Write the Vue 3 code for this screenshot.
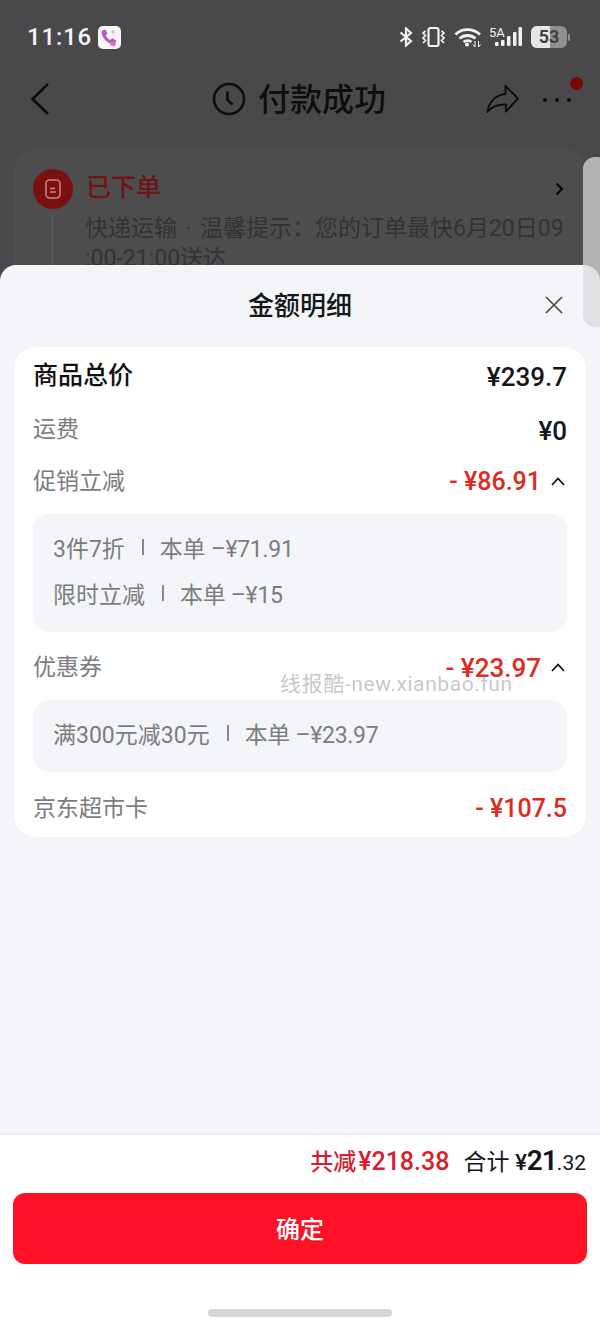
<script setup>
const promos = [
  { name: '3件7折', amount: '本单 –¥71.91' },
  { name: '限时立减', amount: '本单 –¥15' }
]
const coupons = [{ name: '满300元减30元', amount: '本单 –¥23.97' }]
</script>

<template>
  <div class="page">
    <div class="status">
      <span class="time">11:16</span>
      <svg class="app-icon" width="23" height="23" viewBox="0 0 23 23">
        <rect width="23" height="23" rx="5" fill="#fbf6fd" />
        <path d="M4.500 4.500l3-1 2.200 4-1.900 1.700c.8 2.200 2.400 3.900 4.600 4.900l1.900-1.800 3.900 2.300-1 3c-.8 1.100-2.500 1.300-4.400.5C8.500 16 5.200 12.400 3.800 8.200c-.4-1.500-.1-2.800.7-3.700z" fill="#b25ac6" />
        <path d="M11.500 15l2 1.500 1-1 3.500 2-1 2.500c-1 .5-2.500.3-4.500-.8z" fill="#e56fb8" />
        <path d="M15 3.500l.7 1.800 1.800.7-1.800.7-.7 1.800-.7-1.800-1.800-.7 1.800-.7z" fill="#e9a3d6" />
      </svg>
      <div class="status-right">
        <svg width="14" height="20" viewBox="0 0 14 20" fill="none" stroke="#f2f2f2" stroke-width="2.200">
          <path d="M1.500 5.500L12 14l-5 4.500v-17L12 6 1.500 14.500" />
        </svg>
        <svg width="25" height="22" viewBox="0 0 25 22" fill="none" stroke="#f2f2f2" stroke-width="2.200">
          <rect x="7.500" y="2" width="10" height="18" rx="2" />
          <path d="M4.500 5L2 7l2.500 2.500L2 12l2.500 2.500L2 17M20.500 5L23 7l-2.500 2.500L23 12l-2.500 2.500L23 17" stroke-width="1.700" />
        </svg>
        <svg width="28" height="20" viewBox="0 0 28 20" fill="none" stroke="#f2f2f2" stroke-width="2.800">
          <path d="M1.500 7.500C8 1 19 1 26 7.500M5.500 11.500c4.500-4 11.500-4 16 0M9.500 15c2.300-1.800 6-1.800 8 0" />
          <circle cx="13" cy="17.500" r="2" fill="#f2f2f2" stroke="none" />
          <path d="M21 14v6l-2-2.500M24.500 14v6l2-2.500" stroke-width="1" />
        </svg>
        <div class="signal">
          <span class="signal-label">5A</span>
          <svg width="33" height="20" viewBox="0 0 33 20" fill="#f2f2f2">
            <rect x="6" y="15" width="3.500" height="4" rx="1" />
            <rect x="12" y="13" width="3.500" height="6" rx="1" />
            <rect x="18" y="9" width="3.500" height="10" rx="1" />
            <rect x="24" y="5" width="3.500" height="14" rx="1" />
            <rect x="29.500" y="0" width="3.500" height="19" rx="1" />
          </svg>
        </div>
        <div class="battery">
          <div class="battery-body">
            <span class="battery-fill"></span>
            <span class="battery-num">53</span>
          </div>
          <span class="battery-tip"></span>
        </div>
      </div>
    </div>

    <div class="nav">
      <svg class="back" width="22" height="34" viewBox="0 0 22 34" fill="none" stroke="#0d0d0d" stroke-width="2.600">
        <path d="M19 2L3.500 17 19 32" />
      </svg>
      <div class="nav-title">
        <svg width="34" height="34" viewBox="0 0 34 34" fill="none" stroke="#0d0d0d" stroke-width="2.600">
          <circle cx="17" cy="17" r="15" />
          <path d="M15.500 9.500V18l5 4.500" />
        </svg>
        <span>付款成功</span>
      </div>
      <div class="nav-actions">
        <svg width="34" height="30" viewBox="0 0 34 30" fill="none" stroke="#0d0d0d" stroke-width="1.900" stroke-linejoin="round">
          <path d="M19.500 2L32 14.500 20 27.500v-7C12 20 6 22.500 1.500 28c1-9.500 7.500-17 18-18z" />
        </svg>
        <div class="dots"><i></i><i></i><i></i><b></b></div>
      </div>
    </div>

    <div class="order">
      <div class="order-head">
        <span class="order-icon">
          <svg width="20" height="22" viewBox="0 0 20 22" fill="none" stroke="#c58886" stroke-width="1.500">
            <rect x="3" y="2" width="14" height="18" rx="3.500" />
            <path d="M7 10.500h5M7 14h6" />
          </svg>
        </span>
        <span class="order-title">已下单</span>
        <svg class="order-arrow" width="9" height="14" viewBox="0 0 9 14" fill="none" stroke="#050505" stroke-width="2">
          <path d="M1.500 1.500L7 7l-5.500 5.500" />
        </svg>
      </div>
      <div class="order-line"></div>
      <p class="order-text">快递运输<span class="dot">·</span>温馨提示：您的订单最快6月20日09<br />:00-21:00送达</p>
    </div>

    <div class="scroll-thumb"></div>

    <section class="sheet">
      <header class="sheet-head">
        <h2>金额明细</h2>
        <svg class="close" width="20" height="20" viewBox="0 0 20 20" fill="none" stroke="#4b4b4f" stroke-width="1.700">
          <path d="M2 2l16 16M18 2L2 18" />
        </svg>
      </header>

      <div class="card">
        <div class="row row-total">
          <span class="total-label">商品总价</span>
          <span class="total-value">¥239.7</span>
        </div>
        <div class="row row-ship">
          <span class="label">运费</span>
          <span class="total-value">¥0</span>
        </div>
        <div class="row row-promo">
          <span class="label">促销立减</span>
          <span class="minus narrow">
            <span>- ¥86.91</span>
            <svg width="14" height="9" viewBox="0 0 14 9" fill="none" stroke="#111" stroke-width="1.800"><path d="M1 8l6-6.500L13 8" /></svg>
          </span>
        </div>
        <div class="detail">
          <div v-for="p in promos" :key="p.name" class="detail-row">
            <span>{{ p.name }}</span><i></i><span class="amount">{{ p.amount }}</span>
          </div>
        </div>
        <div class="row row-coupon">
          <span class="label">优惠券</span>
          <span class="minus">
            <span>- ¥23.97</span>
            <svg width="14" height="9" viewBox="0 0 14 9" fill="none" stroke="#111" stroke-width="1.800"><path d="M1 8l6-6.500L13 8" /></svg>
          </span>
        </div>
        <div class="detail detail-one">
          <div v-for="c in coupons" :key="c.name" class="detail-row">
            <span>{{ c.name }}</span><i></i><span class="amount">{{ c.amount }}</span>
          </div>
        </div>
        <div class="row row-card">
          <span class="label">京东超市卡</span>
          <span class="minus narrow flush"><span>- ¥107.5</span></span>
        </div>
      </div>

      <div class="footer">
        <div class="sum">
          <span class="sum-off">共减<b>¥218.38</b></span>
          <span class="sum-total">合计 <em>¥</em><strong>21</strong><small>.32</small></span>
        </div>
        <button class="confirm"><span>确定</span></button>
        <div class="home-bar"></div>
      </div>
    </section>

    <div class="watermark">线报酷-new.xianbao.fun</div>
  </div>
</template>

<style>
html, body { margin: 0; padding: 0; }
</style>

<style scoped>
* { box-sizing: border-box; }

.page {
  position: relative;
  width: 600px;
  height: 1327px;
  overflow: hidden;
  background: #49494b;
  font-family: Roboto, "Noto Sans CJK SC", sans-serif;
}

.status {
  display: flex;
  align-items: center;
  height: 74px;
  padding: 0 30px 0 27px;
}
.time {
  color: #f4f4f4;
  font-size: 24px;
  font-weight: 500;
  letter-spacing: 0.800px;
  margin-right: 6px;
}
.status-right {
  display: flex;
  align-items: center;
  gap: 8px;
  margin-left: auto;
}
.signal {
  position: relative;
  width: 33px;
  height: 20px;
  margin-left: -1px;
}
.signal-label {
  position: absolute;
  left: 0;
  top: -1px;
  color: #f2f2f2;
  font-size: 13px;
  line-height: 13px;
}
.battery { display: flex; align-items: center; gap: 1px; margin-left: 1px; }
.battery-body {
  position: relative;
  width: 36px;
  height: 22px;
  border-radius: 6px;
  background: #8f8f90;
  overflow: hidden;
  text-align: center;
}
.battery-fill {
  position: absolute;
  left: 0;
  top: 0;
  bottom: 0;
  width: 19px;
  background: #e6e6e6;
}
.battery-num {
  position: relative;
  display: block;
  color: #404042;
  font-size: 18px;
  font-weight: 700;
  line-height: 22px;
}
.battery-tip { width: 2px; height: 7px; border-radius: 1px; background: #8f8f90; }

.nav {
  position: relative;
  display: flex;
  align-items: center;
  height: 50px;
  padding: 0 29px 0 29px;
}
.nav-title {
  position: absolute;
  left: 212px;
  top: 0;
  height: 50px;
  display: flex;
  align-items: center;
  gap: 12px;
  color: #0f0f0f;
  font-size: 32px;
  font-weight: 500;
}
.nav-title span { padding-bottom: 4px; }
.nav-actions {
  display: flex;
  align-items: center;
  gap: 23px;
  margin-left: auto;
}
.dots { position: relative; display: flex; gap: 8px; padding-top: 1px; }
.dots i { width: 4px; height: 4px; border-radius: 50%; background: #0d0d0d; }
.dots b {
  position: absolute;
  right: -12px;
  top: -20px;
  width: 13px;
  height: 13px;
  border-radius: 50%;
  background: #7a0707;
}

.order {
  position: relative;
  margin: 26px 14px 0;
  padding: 20px 20px 0 19px;
  height: 140px;
  border-radius: 18px;
  background: #4d4d4e;
}
.order-head { display: flex; align-items: center; height: 38px; }
.order-icon {
  display: flex;
  align-items: center;
  justify-content: center;
  width: 40px;
  height: 40px;
  border-radius: 50%;
  background: #7a1010;
  margin-right: 13px;
}
.order-title { color: #701414; font-size: 25px; font-weight: 500; padding-bottom: 8px; }
.order-arrow { margin-left: auto; margin-right: 2px; }
.order-line {
  position: absolute;
  left: 38px;
  top: 66px;
  width: 1px;
  height: 60px;
  background: #5e5e5f;
}
.order-text {
  margin: 6px 0 0;
  padding-left: 52px;
  color: #333334;
  font-size: 23px;
  line-height: 30px;
  white-space: nowrap;
}
.dot { display: inline-block; width: 23px; text-align: center; }
.scroll-thumb {
  position: absolute;
  right: -10px;
  top: 157px;
  width: 27px;
  height: 170px;
  border-radius: 12px;
  background: rgba(219, 219, 219, 0.73);
  z-index: 2;
}

.sheet {
  position: absolute;
  left: 0;
  right: 0;
  top: 265px;
  bottom: 0;
  display: flex;
  flex-direction: column;
  border-radius: 16px 16px 0 0;
  background: #f4f5f9;
}
.sheet-head {
  position: relative;
  height: 82px;
  display: flex;
  align-items: center;
  justify-content: center;
}
.sheet-head h2 {
  margin: 0;
  color: #15161a;
  font-size: 26px;
  font-weight: 500;
  line-height: 82px;
}
.close { position: absolute; right: 36px; top: 30px; }

.card {
  margin: 0 14px;
  height: 490px;
  padding: 0 19px;
  border-radius: 22px;
  background: #fff;
}
.row {
  display: flex;
  align-items: center;
  justify-content: space-between;
}
.row-total { height: 56px; }
.row-ship { height: 52px; }
.row-promo { height: 52px; }
.row-coupon { height: 68px; padding-top: 2px; }
.row-card { height: 72px; }
.total-label { color: #111; font-size: 25px; font-weight: 500; padding-bottom: 4px; }
.total-value { color: #15161a; font-size: 26px; font-weight: 500; padding-top: 3px; }
.label { color: #7c7c80; font-size: 23px; padding-bottom: 4px; }
.minus {
  display: flex;
  align-items: center;
  gap: 10px;
  padding: 1px 2px 0 0;
  color: #e02a1d;
  font-size: 26px;
  font-weight: 500;
  white-space: nowrap;
}
.minus.narrow { font-size: 25px; }
.minus.flush { padding-right: 0; }

.detail {
  height: 118px;
  margin-top: 7px;
  padding: 12px 20px;
  border-radius: 16px;
  background: #f4f5f9;
}
.detail-one { height: 72px; margin-top: 0; }
.detail-row {
  display: flex;
  align-items: center;
  gap: 17px;
  height: 46px;
  padding-bottom: 4px;
  color: #7c7c80;
  font-size: 23px;
  white-space: nowrap;
}
.detail-row i { width: 2px; height: 16px; background: #88888c; margin-right: -1px; }
.amount { letter-spacing: -0.300px; }

.footer {
  margin-top: auto;
  height: 194px;
  border-top: 2px solid #ececee;
  background: #fff;
  position: relative;
}
.sum {
  display: flex;
  align-items: center;
  justify-content: flex-end;
  gap: 14px;
  height: 49px;
  padding-right: 14px;
}
.sum-off { color: #d81e2e; font-size: 23px; font-weight: 500; }
.sum-off b { font-size: 25px; font-weight: 500; margin-left: 2px; }
.sum-total { color: #15161a; font-size: 23px; }
.sum-total em { font-style: normal; font-size: 22px; font-weight: 500; }
.sum-total strong { font-size: 28px; font-weight: 600; letter-spacing: -1px; }
.sum-total small { font-size: 21px; }

.confirm {
  display: block;
  width: 574px;
  height: 71px;
  margin: 9px 13px 0;
  padding: 0 0 2px;
  border: none;
  border-radius: 12px;
  background: #ff1225;
  color: #fff;
  font-family: inherit;
  font-size: 24px;
  font-weight: 500;
}
.home-bar {
  position: absolute;
  left: 208px;
  bottom: 10px;
  width: 184px;
  height: 8px;
  border-radius: 4px;
  background: #d6d6d8;
}

.watermark {
  position: absolute;
  left: 280px;
  top: 670px;
  color: rgba(130, 130, 130, 0.45);
  font-size: 21px;
  line-height: 28px;
  letter-spacing: 0.600px;
  white-space: nowrap;
}
</style>
